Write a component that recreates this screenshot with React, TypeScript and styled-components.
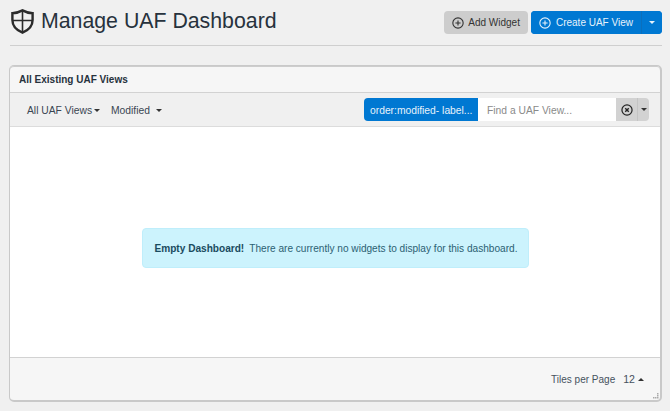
import styled, { createGlobalStyle } from "styled-components";

const GlobalStyle = createGlobalStyle`
  html, body {
    margin: 0;
    padding: 0;
    background: #f0f0f0;
  }
  body {
    font-family: "Liberation Sans", Arial, sans-serif;
    font-size: 10px;
    color: #2f3b47;
  }
  * {
    box-sizing: border-box;
  }
`;

const Page = styled.div`
  width: 670px;
  height: 411px;
  padding: 0 8px 9px 9px;
  display: flex;
  flex-direction: column;
  overflow: hidden;
`;

const Header = styled.header`
  height: 46px;
  margin-left: 1px;
  padding-top: 11px;
  border-bottom: 1px solid #cfcfcf;
  display: flex;
  justify-content: space-between;
  align-items: flex-start;
`;

const TitleWrap = styled.div`
  display: flex;
  align-items: center;
  gap: 7px;
  margin-top: -4px;
  padding-left: 1px;
`;

const Title = styled.h1`
  margin: 0;
  font-size: 21.3px;
  font-weight: 400;
  line-height: 28px;
  color: #27323d;
`;

const Actions = styled.div`
  display: flex;
  gap: 3px;
`;

const Button = styled.button<{ $primary?: boolean }>`
  height: 23px;
  border: none;
  border-radius: ${(p) => (p.$primary ? "0" : "4px")};
  padding: 0 8px;
  display: flex;
  align-items: center;
  gap: ${(p) => (p.$primary ? 5 : 4)}px;
  font: 10px "Liberation Sans", Arial, sans-serif;
  background: ${(p) => (p.$primary ? "#0078d2" : "#cdcdcd")};
  color: ${(p) => (p.$primary ? "#e6f2fb" : "#333")};
`;

const SplitGroup = styled.div`
  display: flex;
  height: 23px;
  border-radius: 4px;
  overflow: hidden;
  background: #0078d2;
`;

const SplitCaret = styled.button`
  width: 21px;
  border: none;
  border-left: 1px solid #0a6fbd;
  background: #0078d2;
  display: flex;
  align-items: center;
  justify-content: center;
  padding: 0;
`;

const Card = styled.section`
  position: relative;
  margin-top: 19px;
  flex: 1;
  display: flex;
  flex-direction: column;
  border: 2px solid #c9c9c9;
  border-top-width: 1px;
  border-left-width: 1px;
  border-radius: 5px;
  background: #f6f6f6;
  box-shadow: inset 0 1px 0 #cdcdcd;
`;

const CardHead = styled.div`
  height: 27px;
  padding: 1px 9px 0;
  display: flex;
  align-items: center;
  font-size: 10px;
  font-weight: 700;
  color: #27323d;
  border-bottom: 1px solid #d2d2d2;
`;

const Toolbar = styled.div`
  height: 34px;
  padding: 0 0 0 17px;
  display: flex;
  align-items: center;
  background: #f0f0f0;
  border-bottom: 1px solid #dcdcdc;
`;

const Menu = styled.span<{ $gap?: number }>`
  display: inline-flex;
  align-items: center;
  gap: ${(p) => p.$gap ?? 2}px;
  margin-right: 11px;
  padding-top: 2px;
  font-size: 10.3px;
  color: #3a4652;
`;

const Search = styled.div`
  margin-left: auto;
  margin-right: 11px;
  height: 23px;
  display: flex;
  border-radius: 4px;
  overflow: hidden;
`;

const SearchTag = styled.div`
  width: 114px;
  padding: 1px 0 0 6px;
  display: flex;
  align-items: center;
  background: #0078d2;
  color: #e6f2fb;
  font-size: 10.3px;
  white-space: nowrap;
  overflow: hidden;
`;

const SearchInput = styled.input`
  width: 138px;
  border: none;
  outline: none;
  background: #fff;
  padding: 1px 9px 0;
  font: 10.3px "Liberation Sans", Arial, sans-serif;
  &::placeholder {
    color: #8a8a8a;
    opacity: 1;
  }
`;

const ClearButton = styled.button`
  width: 21px;
  border: none;
  background: #d2d2d2;
  padding: 0;
  display: flex;
  align-items: center;
  justify-content: center;
`;

const SearchCaret = styled.button`
  width: 12px;
  border: none;
  border-left: 1px solid #c4c4c4;
  background: #d2d2d2;
  padding: 0;
  display: flex;
  align-items: center;
  justify-content: center;
`;

const CardBody = styled.div`
  flex: 1;
  background: #fff;
  display: flex;
  justify-content: center;
  padding-top: 101px;
`;

const Alert = styled.div`
  width: 387px;
  height: 40px;
  border-radius: 4px;
  background: #ccf3fd;
  border: 1px solid #bfeefb;
  display: flex;
  align-items: center;
  padding-left: 12px;
  font-size: 10.1px;
  color: #2b6173;
  white-space: nowrap;
`;

const AlertStrong = styled.strong`
  color: #1a4b60;
  margin-right: 5px;
`;

const Footer = styled.div`
  height: 43px;
  border-top: 1px solid #d2d2d2;
  display: flex;
  align-items: center;
  justify-content: flex-end;
  padding: 0 16px 0 0;
  font-size: 10px;
  color: #46525e;
`;

const PerPage = styled.span`
  margin-left: 8px;
  display: inline-flex;
  align-items: center;
  gap: 3px;
  font-size: 10.6px;
`;

const ResizeHandle = styled.svg`
  position: absolute;
  right: 1px;
  bottom: 1px;
`;

const Caret = ({ color = "#333", up = false }: { color?: string; up?: boolean }) => (
  <svg width="6" height="3" viewBox="0 0 6 3">
    <path d={up ? "M0 3 L3 0 L6 3 Z" : "M0 0 L6 0 L3 3 Z"} fill={color} />
  </svg>
);

const CirclePlus = ({ color }: { color: string }) => (
  <svg width="12" height="12" viewBox="0 0 13 13" fill="none" stroke={color} strokeWidth="1.2">
    <circle cx="6.5" cy="6.5" r="5.6" />
    <path d="M6.5 3.7 V9.3 M3.7 6.5 H9.3" />
  </svg>
);

const ShieldIcon = () => (
  <svg width="23" height="25" viewBox="0 0 23 25" fill="none" stroke="#2b2b2b" strokeWidth="2.4">
    <path d="M11.5 1.4 C14.5 3.2 17.5 4 21.6 4.2 V11 C21.6 17 17.5 21.2 11.5 23.6 C5.5 21.2 1.4 17 1.4 11 V4.2 C5.5 4 8.5 3.2 11.5 1.4 Z" />
    <path d="M11.5 2 V23 M2 11.5 H21" strokeWidth="1.6" />
  </svg>
);

const ClearIcon = () => (
  <svg width="12" height="12" viewBox="0 0 13 13" fill="none" stroke="#222">
    <circle cx="6.5" cy="6.5" r="5.5" strokeWidth="1.3" />
    <path d="M4.6 4.6 L8.4 8.4 M8.4 4.6 L4.6 8.4" strokeWidth="1.5" />
  </svg>
);

const App = () => {
  return (
    <>
      <GlobalStyle />
      <Page>
        <Header>
          <TitleWrap>
            <ShieldIcon />
            <Title>Manage UAF Dashboard</Title>
          </TitleWrap>
          <Actions>
            <Button>
              <CirclePlus color="#333" />
              Add Widget
            </Button>
            <SplitGroup>
              <Button $primary>
                <CirclePlus color="#e6f2fb" />
                Create UAF View
              </Button>
              <SplitCaret>
                <Caret color="#e6f2fb" />
              </SplitCaret>
            </SplitGroup>
          </Actions>
        </Header>

        <Card>
          <CardHead>All Existing UAF Views</CardHead>
          <Toolbar>
            <Menu>
              All UAF Views <Caret />
            </Menu>
            <Menu $gap={6}>
              Modified <Caret />
            </Menu>
            <Search>
              <SearchTag>order:modified- label...</SearchTag>
              <SearchInput placeholder="Find a UAF View..." />
              <ClearButton>
                <ClearIcon />
              </ClearButton>
              <SearchCaret>
                <Caret />
              </SearchCaret>
            </Search>
          </Toolbar>
          <CardBody>
            <Alert>
              <AlertStrong>Empty Dashboard!</AlertStrong>
              There are currently no widgets to display for this dashboard.
            </Alert>
          </CardBody>
          <Footer>
            Tiles per Page
            <PerPage>
              12 <Caret up />
            </PerPage>
          </Footer>
          <ResizeHandle width="6" height="6" viewBox="0 0 6 6" fill="#aaa">
            <rect x="4" y="0" width="1.5" height="1.5" />
            <rect x="4" y="2" width="1.5" height="1.5" />
            <rect x="4" y="4" width="1.5" height="1.5" />
            <rect x="2" y="4" width="1.5" height="1.5" />
            <rect x="0" y="4" width="1.5" height="1.5" />
          </ResizeHandle>
        </Card>
      </Page>
    </>
  );
};

export default App;
